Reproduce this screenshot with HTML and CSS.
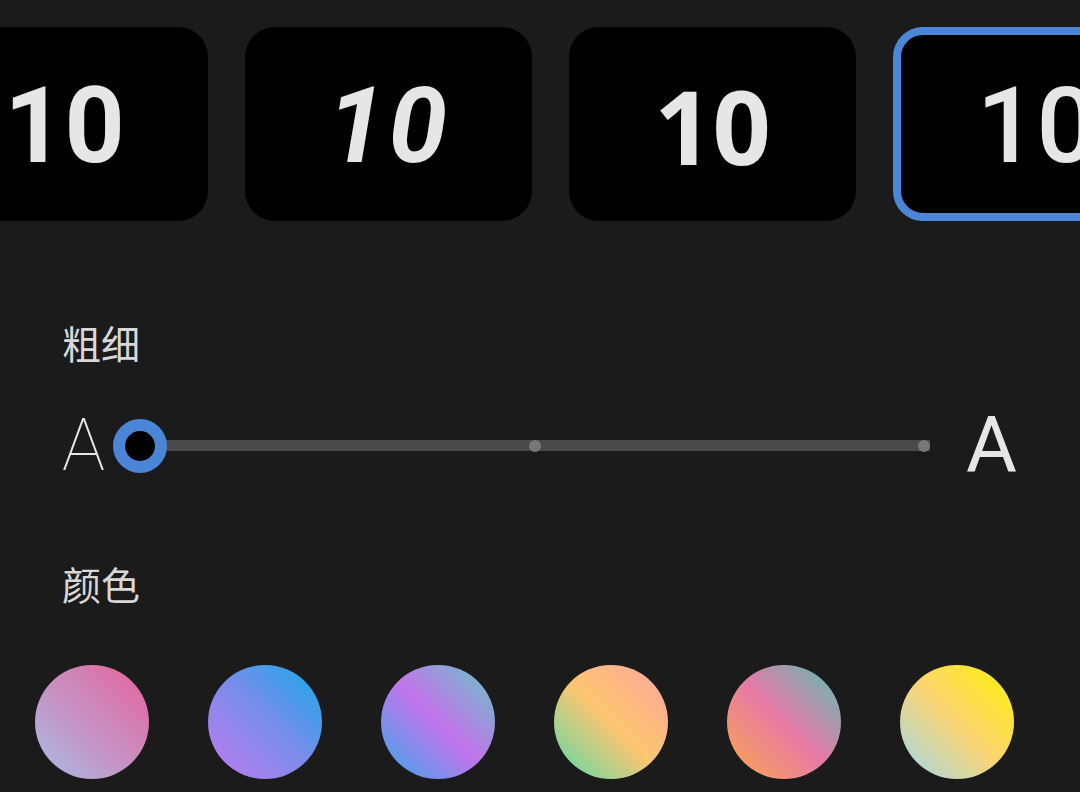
FILE: index.html
```html
<!DOCTYPE html>
<html lang="zh-CN">
<head>
    <meta charset="UTF-8">
    <meta name="viewport" content="width=device-width, initial-scale=1.0">
    <title>字体样式</title>
    <link rel="stylesheet" href="styles.css">
</head>
<body>
    <div class="font-strip">
        <div class="font-row">
            <div class="font-card f-bold">10</div>
            <div class="font-card f-italic">10</div>
            <div class="font-card f-round">10</div>
            <div class="font-card f-plain selected">10</div>
        </div>
    </div>

    <div class="section">
        <div class="section-title">粗细</div>
        <div class="weight-row">
            <span class="a-thin">A</span>
            <div class="slider">
                <div class="track"></div>
                <span class="dot" style="left: 422px"></span>
                <span class="dot" style="left: 811px"></span>
                <span class="thumb"></span>
            </div>
            <span class="a-bold">A</span>
        </div>
    </div>

    <div class="section color-section">
        <div class="section-title">颜色</div>
    </div>
    <div class="swatches">
        <div class="swatch c1"></div>
        <div class="swatch c2"></div>
        <div class="swatch c3"></div>
        <div class="swatch c4"></div>
        <div class="swatch c5"></div>
        <div class="swatch c6"></div>
    </div>
</body>
</html>
```

FILE: styles.css
```css
body {
    margin: 0;
    background: #1b1b1b;
    font-family: Roboto, "Noto Sans CJK SC", sans-serif;
    color: #e6e6e6;
    height: 792px;
    overflow: hidden;
}
.font-strip {
    overflow: hidden;
    padding-top: 27px;
}
.font-row {
    display: flex;
    gap: 37px;
    margin-left: -79px;
}
.font-card {
    flex: 0 0 287px;
    height: 194px;
    box-sizing: border-box;
    background: #000;
    border-radius: 30px;
    display: flex;
    align-items: center;
    justify-content: center;
    font-size: 105px;
    color: #e6e6e6;
    line-height: 1;
    padding-top: 4px;
}
.font-card.selected {
    border: 8px solid #4b87d9;
}
.f-bold {
    font-family: Roboto, sans-serif;
    font-weight: 700;
}
.f-italic {
    font-family: Roboto, sans-serif;
    font-weight: 700;
    font-style: italic;
    letter-spacing: 3px;
}
.f-round {
    font-family: "Open Sans", sans-serif;
    font-weight: 700;
    font-size: 102px;
}
.f-plain {
    font-family: Roboto, sans-serif;
    font-weight: 500;
}
.section {
    padding-left: 62px;
    margin-top: 99px;
}
.section-title {
    font-family: "Noto Sans CJK SC", sans-serif;
    font-size: 39px;
    line-height: 44px;
    color: #d8d8d8;
}
.weight-row {
    display: flex;
    align-items: center;
    height: 56px;
    margin-top: 54px;
}
.a-thin {
    width: 44px;
    margin-right: 7px;
    font-family: Roboto, sans-serif;
    font-weight: 100;
    font-size: 72px;
    line-height: 56px;
    color: #e6e6e6;
}
.slider {
    position: relative;
    width: 817px;
    height: 56px;
}
.track {
    position: absolute;
    left: 27px;
    right: 0;
    top: 22px;
    height: 11px;
    background: #4a4a4a;
}
.dot {
    position: absolute;
    top: 22px;
    width: 12px;
    height: 12px;
    margin-left: -6px;
    border-radius: 50%;
    background: #777;
}
.thumb {
    position: absolute;
    left: 0;
    top: 1px;
    width: 54px;
    height: 54px;
    box-sizing: border-box;
    border: 12px solid #4a86d8;
    border-radius: 50%;
    background: #000;
}
.a-bold {
    margin-left: 36px;
    font-family: Roboto, sans-serif;
    font-size: 78px;
    line-height: 56px;
    color: #e6e6e6;
}
.color-section {
    margin-top: 87px;
}
.swatches {
    display: flex;
    gap: 59px;
    padding-left: 35px;
    margin-top: 60px;
}
.swatch {
    width: 114px;
    height: 114px;
    border-radius: 50%;
    flex: none;
}
.c1 { background: linear-gradient(to top right, #a9bde8, #c98ebf 50%, #e5629b); }
.c2 { background: linear-gradient(to top right, #c07af0, #7c8cea 50%, #15abea); }
.c3 { background: linear-gradient(to top right, #36a9ea, #c274ec 50%, #66c6c4); }
.c4 { background: linear-gradient(to top right, #55dbab, #fdc66f 50%, #fea5a2); }
.c5 { background: linear-gradient(to top right, #fca84b, #e679a6 50%, #56c2b4); }
.c6 { background: linear-gradient(to top right, #9fd8ec, #fbd570 50%, #fff200); }
```
